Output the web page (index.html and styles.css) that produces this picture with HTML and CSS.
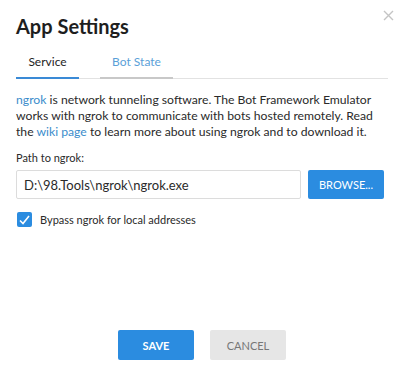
FILE: index.html
```html
<!DOCTYPE html>
<html lang="en">
  <head>
    <meta charset="UTF-8">
    <title>App Settings</title>
    <link rel="stylesheet" href="styles.css">
  </head>
  <body>
    <div class="dialog">
        <button class="close" aria-label="Close">
            <svg width="11" height="11" viewBox="0 0 11 11"><path d="M1 1L10 10M10 1L1 10" stroke="#c4c4c4" stroke-width="1.4"/></svg>
        </button>

        <h1 class="title">App Settings</h1>

        <div class="tabs">
            <div class="tab active">Service</div>
            <div class="tab">Bot State</div>
        </div>

        <p class="description">
            <a href="#">ngrok</a> is network tunneling software. The Bot Framework Emulator works with ngrok to communicate with bots hosted remotely. Read the <a href="#">wiki page</a> to learn more about using ngrok and to download it.
        </p>

        <label class="field-label">Path to ngrok:</label>
        <div class="path-row">
            <input class="path-input" type="text" value="D:\98.Tools\ngrok\ngrok.exe">
            <button class="browse">BROWSE...</button>
        </div>

        <label class="check-row">
            <span class="checkbox">
                <svg width="11" height="10" viewBox="0 0 11 10"><path d="M1 5.5L4 8.5L10 1" fill="none" stroke="#fff" stroke-width="1.6"/></svg>
            </span>
            Bypass ngrok for local addresses
        </label>

        <div class="footer">
            <button class="btn primary">SAVE</button>
            <button class="btn secondary">CANCEL</button>
        </div>
    </div>
  </body>
</html>
```

FILE: styles.css
```css
:root {
    --primary-color: #2b8ce0;
    --link-color: #3a8ccb;
    --text-primary: #1e1e1e;
    --text-secondary: #2a2a2a;
    --border-color: #dcdcdc;
}

body {
    margin: 0;
    font-family: 'Lato', 'Open Sans', sans-serif;
    color: var(--text-primary);
    background: #fff;
}

.dialog {
    position: relative;
    box-sizing: border-box;
    height: 380px;
    padding: 12px 15px 20px 16px;
    display: flex;
    flex-direction: column;
}

.close {
    position: absolute;
    top: 9px;
    right: 9px;
    border: none;
    background: none;
    padding: 0;
    cursor: pointer;
}

.title {
    margin: 0;
    font-size: 20px;
    font-weight: 700;
    line-height: 28px;
}

.tabs {
    display: flex;
    margin-top: 14px;
    border-bottom: 1px solid #e2e2e2;
}

.tab {
    width: 63px;
    text-align: center;
    font-size: 12px;
    line-height: 16px;
    padding-bottom: 7px;
    border-bottom: 2px solid #c8c8c8;
    margin-bottom: -1px;
    color: #5a9fd8;
}

.tab + .tab {
    width: 73px;
    margin-left: 21px;
}

.tab.active {
    color: var(--text-primary);
    border-bottom-color: #3a8ad6;
}

.description {
    margin: 13px 0 0;
    font-size: 12.2px;
    line-height: 16px;
    color: var(--text-secondary);
}

.description a {
    color: var(--link-color);
    text-decoration: none;
}

.field-label {
    margin-top: 10px;
    font-size: 11px;
    line-height: 15px;
    color: var(--text-secondary);
}

.path-row {
    display: flex;
    gap: 7px;
    margin-top: 5px;
    padding-right: 4px;
}

.path-input {
    flex: 1;
    height: 29px;
    box-sizing: border-box;
    border: 1px solid var(--border-color);
    border-radius: 2px;
    padding: 0 7px;
    font-family: inherit;
    font-size: 13px;
    color: var(--text-secondary);
}

.browse {
    width: 76px;
    height: 29px;
    border: none;
    border-radius: 2px;
    background: var(--primary-color);
    color: #fff;
    font-family: inherit;
    font-size: 11px;
}

.check-row {
    display: flex;
    align-items: center;
    gap: 8px;
    margin-top: 13px;
    font-size: 11px;
    color: var(--text-secondary);
}

.checkbox {
    width: 15px;
    height: 15px;
    border-radius: 2px;
    background: var(--primary-color);
    display: flex;
    align-items: center;
    justify-content: center;
    margin-left: 1px;
}

.footer {
    margin-top: auto;
    display: flex;
    justify-content: center;
    gap: 16px;
}

.btn {
    width: 76px;
    height: 30px;
    border: none;
    border-radius: 2px;
    font-family: inherit;
    font-size: 11px;
}

.btn.primary {
    background: var(--primary-color);
    color: #fff;
    font-weight: 700;
}

.btn.secondary {
    background: #e6e6e6;
    color: #777;
}
```
